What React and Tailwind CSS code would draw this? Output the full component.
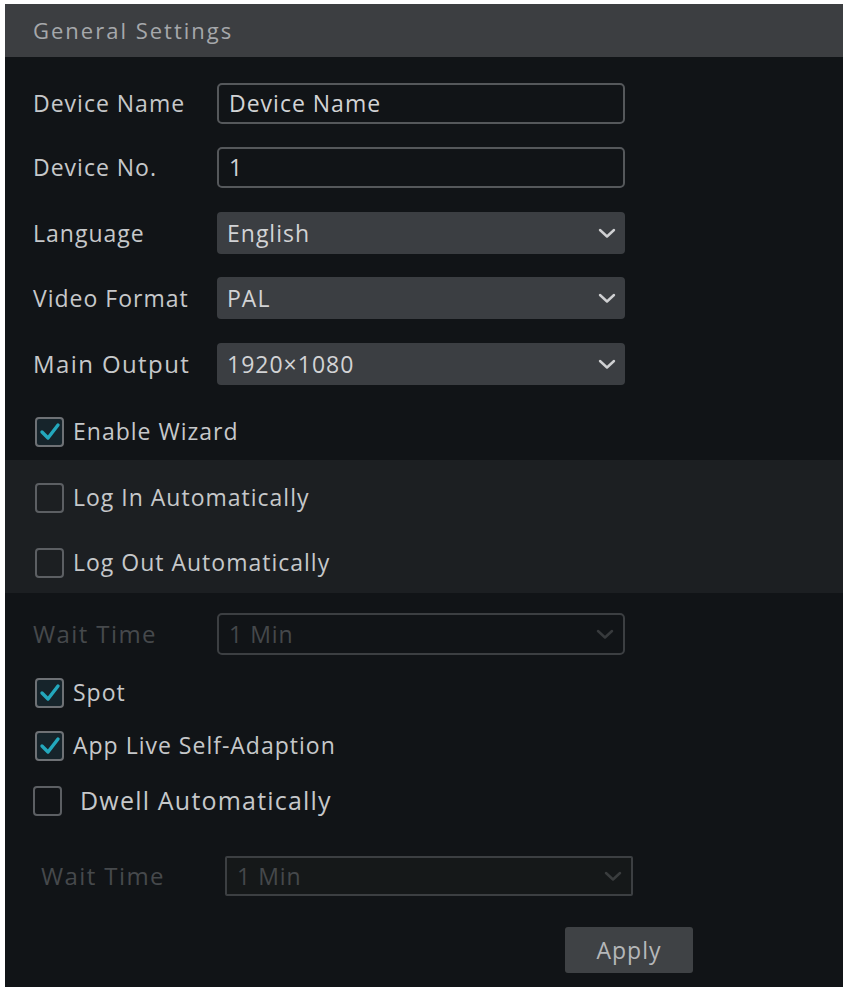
import React from "react";

const font = { fontFamily: '"Open Sans", "Noto Sans", sans-serif' };

function Chevron({ dim }) {
  return (
    <svg width="20" height="12" viewBox="0 0 20 12" className={dim ? "opacity-20" : ""}>
      <path d="M3 3 L10 9.5 L17 3" fill="none" stroke="#cfd0d2" strokeWidth="2.4" strokeLinecap="round" strokeLinejoin="round" />
    </svg>
  );
}

function Checkbox({ checked }) {
  return (
    <div
      className={
        "w-[29px] h-[30px] rounded-[4px] border-2 flex items-center justify-center shrink-0 " +
        (checked ? "border-[#6e7175] bg-[#16242b]" : "border-[#5c5f63] bg-transparent")
      }
    >
      {checked && (
        <svg width="22" height="20" viewBox="0 0 22 20">
          <path d="M3 10 L9 16 L19 3" fill="none" stroke="#23a8bd" strokeWidth="3.4" strokeLinecap="round" strokeLinejoin="round" />
        </svg>
      )}
    </div>
  );
}

function Label({ children, dim, big }) {
  return (
    <div
      className={
        "w-[184px] shrink-0 " +
        (big ? "text-[24px] tracking-[1.4px] " : "text-[23px] tracking-[1px] ") +
        (dim ? "text-[#46494c]" : "text-[#c6c8ca]")
      }
    >
      {children}
    </div>
  );
}

function TextRow({ label, value }) {
  return (
    <div className="flex items-center h-[41px]">
      <Label>{label}</Label>
      <div className="w-[408px] h-[41px] rounded-[5px] border-2 border-[#55585b] flex items-center px-[10px] text-[23px] tracking-[1px] text-[#d2d3d5]">
        {value}
      </div>
    </div>
  );
}

function SelectRow({ label, value, big }) {
  return (
    <div className="flex items-center h-[42px]">
      <Label big={big}>{label}</Label>
      <div className="w-[408px] h-[42px] rounded-[4px] bg-[#3b3e42] flex items-center justify-between pl-[10px] pr-[8px] text-[23px] tracking-[1px] text-[#d2d3d5]">
        <span>{value}</span>
        <Chevron />
      </div>
    </div>
  );
}

function CheckRow({ checked, label, gap = "gap-[9px]", big }) {
  return (
    <div className={"flex items-center h-[31px] " + gap}>
      <Checkbox checked={checked} />
      <span className={(big ? "text-[24px] tracking-[1.4px] " : "text-[23px] tracking-[1px] ") + "text-[#c6c8ca]"}>
        {label}
      </span>
    </div>
  );
}

export default function App() {
  return (
    <div className="w-[845px] h-[993px] bg-white pt-[4px] pl-[5px] pr-[2px] pb-[6px]" style={font}>
      <div className="w-full h-full bg-[#111417] flex flex-col">
        <div className="h-[53px] bg-[#3c3e41] flex items-center pl-[28px] text-[22px] tracking-[2px] text-[#a6a8ab]">
          General Settings
        </div>
        <div className="flex flex-col pl-[28px]">
          <div className="mt-[26px]">
            <TextRow label="Device Name" value="Device Name" />
          </div>
          <div className="mt-[23px]">
            <TextRow label="Device No." value="1" />
          </div>
          <div className="mt-[24px]">
            <SelectRow label="Language" value="English" />
          </div>
          <div className="mt-[23px]">
            <SelectRow label="Video Format" value="PAL" />
          </div>
          <div className="mt-[24px]">
            <SelectRow label="Main Output" value="1920×1080" big />
          </div>
          <div className="mt-[31px] ml-[2px]">
            <CheckRow checked label="Enable Wizard" />
          </div>
        </div>
        <div className="mt-[13px] h-[133px] bg-[#1c1f22] flex flex-col pl-[30px] pt-[22px]">
          <CheckRow label="Log In Automatically" />
          <div className="mt-[34px]">
            <CheckRow label="Log Out Automatically" />
          </div>
        </div>
        <div className="flex flex-col pl-[28px]">
          <div className="mt-[20px] flex items-center h-[42px]">
            <Label dim big>Wait Time</Label>
            <div className="w-[408px] h-[42px] rounded-[5px] border-2 border-[#3c3f42] flex items-center justify-between pl-[10px] pr-[8px] text-[23px] tracking-[1px] text-[#45484b]">
              <span>1 Min</span>
              <Chevron dim />
            </div>
          </div>
          <div className="mt-[22px] ml-[2px]">
            <CheckRow checked label="Spot" />
          </div>
          <div className="mt-[22px] ml-[2px]">
            <CheckRow checked label="App Live Self-Adaption" />
          </div>
          <div className="mt-[24px]">
            <div className="flex items-center h-[31px] gap-[18px]">
              <Checkbox />
              <span className="text-[25px] tracking-[1.2px] text-[#c6c8ca]">Dwell Automatically</span>
            </div>
          </div>
          <div className="mt-[40px] ml-[8px] flex items-center h-[40px]">
            <Label dim big>Wait Time</Label>
            <div className="w-[408px] h-[40px] rounded-[2px] border-2 border-[#3c3f42] bg-[#151819] flex items-center justify-between pl-[10px] pr-[8px] text-[23px] tracking-[1px] text-[#45484b]">
              <span>1 Min</span>
              <Chevron dim />
            </div>
          </div>
          <div className="mt-[31px] pl-[532px]">
            <button className="w-[128px] h-[46px] rounded-[3px] bg-[#3f4245] text-[23px] tracking-[1px] text-[#b5b7b9]">
              Apply
            </button>
          </div>
        </div>
      </div>
    </div>
  );
}
